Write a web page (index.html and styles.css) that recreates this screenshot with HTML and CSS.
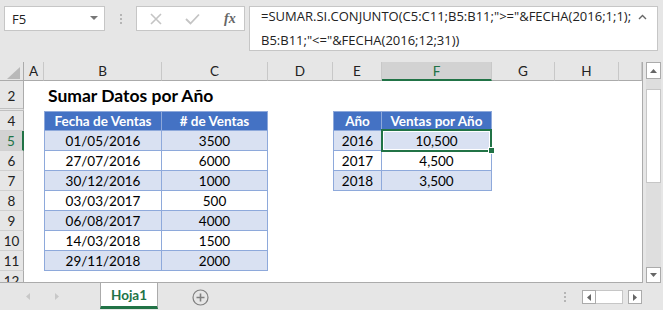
FILE: index.html
```html
<!DOCTYPE html>
<html lang="es">
  <head>
    <meta charset="UTF-8" />
    <meta name="viewport" content="width=device-width, initial-scale=1.0" />
    <title>Sumar Datos por Año</title>
    <link rel="stylesheet" href="styles.css">
  </head>
  <body>
    <div class="toolbar">
      <div class="namebox">
        <span>F5</span>
        <svg class="dd" width="8" height="5" viewBox="0 0 8 5"><path d="M0 0h8L4 4z" fill="#777"/></svg>
      </div>
      <div class="grip"><i></i><i></i><i></i></div>
      <div class="fbtns">
        <svg width="12" height="12" viewBox="0 0 12 12"><path d="M1 1l10 10M11 1L1 11" stroke="#c4c4c4" stroke-width="1.6"/></svg>
        <svg width="15" height="12" viewBox="0 0 15 12"><path d="M1 6l4.5 4.5L14 1.5" stroke="#c4c4c4" stroke-width="1.8" fill="none"/></svg>
        <span class="fx">fx</span>
      </div>
      <div class="formula">
        <div class="ftext">=SUMAR.SI.CONJUNTO(C5:C11;B5:B11;"&gt;="&amp;FECHA(2016;1;1);<br>B5:B11;"&lt;="&amp;FECHA(2016;12;31))</div>
        <svg class="collapse" width="9" height="6" viewBox="0 0 9 6"><path d="M1 5l3.5-3.5L8 5" stroke="#666" stroke-width="1.4" fill="none"/></svg>
      </div>
    </div>

    <div class="main">
      <div class="sheet">
        <table class="grid">
          <colgroup>
            <col style="width:24px"><col style="width:20px"><col style="width:118px"><col style="width:106px">
            <col style="width:65px"><col style="width:49px"><col style="width:110px"><col style="width:63px">
            <col style="width:64px"><col style="width:23px">
          </colgroup>
          <tr class="colhead">
            <th class="corner"><svg width="13" height="12" viewBox="0 0 13 12"><path d="M13 0v12H0z" fill="#b9b9b9"/></svg></th>
            <th>A</th><th>B</th><th>C</th><th>D</th><th>E</th><th class="on">F</th><th>G</th><th>H</th><th></th>
          </tr>
          <tr class="row-title">
            <th class="rh hidden-next">2</th><td></td>
            <td class="title" colspan="3">Sumar Datos por Año</td>
            <td></td><td></td><td></td><td></td><td></td>
          </tr>
          <tr>
            <th class="rh">4</th><td></td>
            <td class="t tl h">Fecha de Ventas</td><td class="t h"># de Ventas</td><td></td>
            <td class="t tl h">Año</td><td class="t h">Ventas por Año</td>
            <td></td><td></td><td></td>
          </tr>
          <tr>
            <th class="rh on">5</th><td></td>
            <td class="t tl band">01/05/2016</td><td class="t band">3500</td><td></td>
            <td class="t tl band">2016</td><td class="t band sel">10,500</td>
            <td></td><td></td><td></td>
          </tr>
          <tr>
            <th class="rh">6</th><td></td>
            <td class="t tl">27/07/2016</td><td class="t">6000</td><td></td>
            <td class="t tl">2017</td><td class="t">4,500</td>
            <td></td><td></td><td></td>
          </tr>
          <tr>
            <th class="rh">7</th><td></td>
            <td class="t tl band">30/12/2016</td><td class="t band">1000</td><td></td>
            <td class="t tl band">2018</td><td class="t band">3,500</td>
            <td></td><td></td><td></td>
          </tr>
          <tr>
            <th class="rh">8</th><td></td>
            <td class="t tl">03/03/2017</td><td class="t">500</td>
            <td></td><td></td><td></td><td></td><td></td><td></td>
          </tr>
          <tr>
            <th class="rh">9</th><td></td>
            <td class="t tl band">06/08/2017</td><td class="t band">4000</td>
            <td></td><td></td><td></td><td></td><td></td><td></td>
          </tr>
          <tr>
            <th class="rh">10</th><td></td>
            <td class="t tl">14/03/2018</td><td class="t">1500</td>
            <td></td><td></td><td></td><td></td><td></td><td></td>
          </tr>
          <tr>
            <th class="rh">11</th><td></td>
            <td class="t tl band">29/11/2018</td><td class="t band">2000</td>
            <td></td><td></td><td></td><td></td><td></td><td></td>
          </tr>
          <tr>
            <th class="rh">12</th><td></td><td></td><td></td><td></td><td></td><td></td><td></td><td></td><td></td>
          </tr>
        </table>
      </div>
      <div class="vscroll">
        <div class="sbtn"><svg width="7" height="4" viewBox="0 0 7 4"><path d="M0 4h7L3.5 0z" fill="#666"/></svg></div>
        <div class="vthumb"></div>
        <div class="sbtn"><svg width="7" height="4" viewBox="0 0 7 4"><path d="M0 0h7L3.5 4z" fill="#666"/></svg></div>
      </div>
    </div>

    <div class="tabbar">
      <div class="tabnav">
        <svg width="4" height="7" viewBox="0 0 4 7"><path d="M4 0v7L0 3.5z" fill="#c8c8c8"/></svg>
        <svg width="4" height="7" viewBox="0 0 4 7"><path d="M0 0v7l4-3.5z" fill="#c8c8c8"/></svg>
      </div>
      <div class="tab">Hoja1</div>
      <svg class="addsheet" width="17" height="17" viewBox="0 0 17 17">
        <circle cx="8.5" cy="8.5" r="7.5" stroke="#808080" stroke-width="1.2" fill="none"/>
        <path d="M8.5 4.5v8M4.5 8.5h8" stroke="#808080" stroke-width="1.6"/>
      </svg>
      <div class="spacer"></div>
      <div class="grip small"><i></i><i></i><i></i></div>
      <div class="hscroll">
        <div class="hbtn"><svg width="4" height="7" viewBox="0 0 4 7"><path d="M4 0v7L0 3.5z" fill="#666"/></svg></div>
        <div class="hthumb"></div>
        <div class="hbtn right"><svg width="4" height="7" viewBox="0 0 4 7"><path d="M0 0v7l4-3.5z" fill="#666"/></svg></div>
      </div>
    </div>
  </body>
</html>
```

FILE: styles.css
```css
body {
  margin: 0;
  width: 663px;
  height: 310px;
  overflow: hidden;
  background-color: #e6e6e6;
  font-family: Lato, sans-serif;
  color: #000;
}

/* top: name box + formula bar */
.toolbar {
  display: flex;
  align-items: flex-start;
  height: 62px;
  padding: 6px 0 0 4px;
  box-sizing: border-box;
}
.namebox {
  display: flex;
  align-items: center;
  justify-content: space-between;
  width: 101px;
  height: 25px;
  box-sizing: border-box;
  padding: 0 6px 0 7px;
  background-color: #fff;
  border: 1px solid #c6c6c6;
  font-family: "Open Sans", sans-serif;
  font-size: 13px;
  color: #222;
}
.grip {
  display: flex;
  flex-direction: column;
  gap: 2px;
  margin: 8px 0 0 15px;
}
.grip i {
  display: block;
  width: 2px;
  height: 2px;
  background-color: #b5b5b5;
}
.fbtns {
  display: flex;
  align-items: center;
  width: 109px;
  height: 25px;
  box-sizing: border-box;
  margin-left: 14px;
  padding-left: 13px;
  gap: 23px;
  background-color: #fff;
  border: 1px solid #c6c6c6;
}
.fx {
  margin-left: 1px;
  font-family: "Liberation Serif", serif;
  font-style: italic;
  font-weight: bold;
  font-size: 14px;
  color: #666;
}
.formula {
  display: flex;
  justify-content: space-between;
  width: 409px;
  height: 45px;
  box-sizing: border-box;
  margin-left: 4px;
  padding: 0 10px 0 11px;
  background-color: #fff;
  border: 1px solid #c6c6c6;
}
.ftext {
  margin-top: -3px;
  line-height: 24px;
  font-family: "Open Sans", sans-serif;
  font-size: 13px;
  color: #222;
}
.collapse {
  margin-top: 7px;
}

/* sheet */
.main {
  display: flex;
  height: 221px;
}
.sheet {
  width: 643px;
  height: 221px;
  box-sizing: border-box;
  overflow: hidden;
  background-color: #fff;
  border-right: 1px solid #ababab;
  border-bottom: 1px solid #ababab;
}
.grid {
  table-layout: fixed;
  width: 642px;
  border-collapse: separate;
  border-spacing: 0;
  font-size: 13.5px;
}
.grid th,
.grid td {
  padding: 0;
  text-align: center;
  vertical-align: middle;
  white-space: nowrap;
  line-height: 16px;
}
.grid tr {
  height: 20px;
}
.grid tr.colhead {
  height: 19px;
}
.grid tr.row-title {
  height: 30px;
}
.colhead th {
  background-color: #e6e6e6;
  font-weight: normal;
  color: #222;
  border-right: 1px solid #c8c8c8;
  border-bottom: 1px solid #ababab;
}
.colhead th.corner {
  border-right-color: #ababab;
  text-align: right;
  vertical-align: bottom;
  padding: 0 3px 1px 0;
}
.colhead th.corner svg {
  display: block;
  margin-left: auto;
}
.colhead th.on {
  background-color: #d2d2d2;
  color: #217346;
  border-bottom: 2px solid #217346;
}
.rh {
  background-color: #e6e6e6;
  font-weight: normal;
  color: #222;
  border-right: 1px solid #ababab;
  border-bottom: 1px solid #d0d0d0;
}
.grid .rh.hidden-next {
  vertical-align: bottom;
  padding-bottom: 4px;
  border-bottom: 3px double #c0c0c0;
}
.rh.on {
  background-color: #d2d2d2;
  color: #217346;
  border-right: 2px solid #217346;
}
.grid td.title {
  text-align: left;
  vertical-align: bottom;
  padding: 0 0 5px 4px;
  font-size: 17.5px;
  font-weight: bold;
  line-height: 20px;
}

/* data tables */
.t {
  border-right: 1px solid #8ea9db;
  border-bottom: 1px solid #8ea9db;
}
.t.tl {
  border-left: 1px solid #8ea9db;
}
.t.h {
  border-top: 1px solid #8ea9db;
  background-color: #4472c4;
  color: #fff;
  font-weight: bold;
}
.t.band {
  background-color: #d9e1f2;
}
.t.sel {
  position: relative;
}
.t.sel::before {
  content: "";
  position: absolute;
  left: -1px;
  top: -2px;
  right: -1px;
  bottom: -2px;
  border: 2px solid #217346;
  box-shadow: inset 0 0 0 1px #fff;
}
.t.sel::after {
  content: "";
  position: absolute;
  right: -4px;
  bottom: -4px;
  width: 5px;
  height: 5px;
  background-color: #217346;
  border: 1px solid #fff;
}

/* vertical scrollbar */
.vscroll {
  display: flex;
  flex-direction: column;
  width: 15px;
  margin-left: 3px;
  background-color: #dedede;
}
.sbtn {
  display: flex;
  align-items: center;
  justify-content: center;
  height: 16px;
  box-sizing: border-box;
  background-color: #fff;
  border: 1px solid #ababab;
}
.sbtn:first-child {
  height: 17px;
}
.vthumb {
  height: 94px;
  margin: 10px 0 auto;
  box-sizing: border-box;
  background-color: #fff;
  border: 1px solid #c6c6c6;
}

/* sheet tabs */
.tabbar {
  display: flex;
  align-items: flex-start;
  height: 27px;
}
.tabnav {
  display: flex;
  align-items: center;
  gap: 25px;
  width: 100px;
  height: 27px;
  padding-left: 26px;
  box-sizing: border-box;
}
.tab {
  width: 58px;
  height: 26px;
  box-sizing: border-box;
  padding-top: 4px;
  text-align: center;
  background-color: #fff;
  border-left: 1px solid #ababab;
  border-right: 1px solid #ababab;
  border-bottom: 3px solid #217346;
  color: #217346;
  font-weight: bold;
  font-size: 13.5px;
}
.addsheet {
  margin: 6px 0 0 34px;
}
.spacer {
  flex: 1;
}
.grip.small {
  margin: 9px 16px 0 0;
}
.hscroll {
  display: flex;
  margin: 7px 21px 0 0;
}
.hbtn {
  display: flex;
  align-items: center;
  justify-content: center;
  width: 14px;
  height: 14px;
  box-sizing: border-box;
  background-color: #fff;
  border: 1px solid #ababab;
}
.hbtn.right {
  margin-left: 5px;
}
.hthumb {
  width: 27px;
  height: 14px;
  box-sizing: border-box;
  background-color: #fff;
  border: 1px solid #c6c6c6;
  border-left: none;
}
```
